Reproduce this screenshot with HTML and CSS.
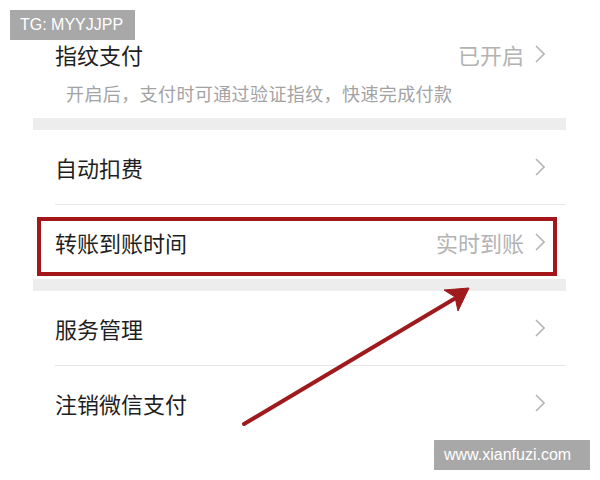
FILE: index.html
```html
<!DOCTYPE html>
<html lang="zh-CN">
<head>
    <meta charset="UTF-8">
    <meta name="viewport" content="width=device-width, initial-scale=1.0">
    <title>支付设置</title>
    <link rel="stylesheet" href="styles.css">
</head>
<body>

    <div class="page">

        <div class="settings">

            <div class="group">
                <div class="item-first">
                    <div class="row-line">
                        <span class="title">指纹支付</span>
                        <span class="value">已开启
                            <svg class="chevron" width="10" height="18" viewBox="0 0 10 18"><polyline points="1,1 9,9 1,17"/></svg>
                        </span>
                    </div>
                    <div class="desc">开启后，支付时可通过验证指纹，快速完成付款</div>
                </div>
            </div>

            <div class="spacer"></div>

            <div class="group">
                <div class="row">
                    <span class="title">自动扣费</span>
                    <span class="value">
                        <svg class="chevron" width="10" height="18" viewBox="0 0 10 18"><polyline points="1,1 9,9 1,17"/></svg>
                    </span>
                </div>
                <div class="divider"></div>
                <div class="row row-marked">
                    <span class="title">转账到账时间</span>
                    <span class="value">实时到账
                        <svg class="chevron" width="10" height="18" viewBox="0 0 10 18"><polyline points="1,1 9,9 1,17"/></svg>
                    </span>
                    <div class="mark"></div>
                </div>
            </div>

            <div class="spacer"></div>

            <div class="group">
                <div class="row">
                    <span class="title">服务管理</span>
                    <span class="value">
                        <svg class="chevron" width="10" height="18" viewBox="0 0 10 18"><polyline points="1,1 9,9 1,17"/></svg>
                    </span>
                </div>
                <div class="divider"></div>
                <div class="row">
                    <span class="title">注销微信支付</span>
                    <span class="value">
                        <svg class="chevron" width="10" height="18" viewBox="0 0 10 18"><polyline points="1,1 9,9 1,17"/></svg>
                    </span>
                </div>
            </div>

        </div>

        <!-- annotation arrow -->
        <svg class="arrow" width="600" height="480" viewBox="0 0 600 480">
            <line x1="244" y1="424" x2="454" y2="299"/>
            <polygon points="469,288 444,290 455,297 458,311"/>
        </svg>

        <div class="tag tag-top">TG: MYYJJPP</div>
        <div class="tag tag-bottom">www.xianfuzi.com</div>

    </div>

</body>
</html>
```

FILE: styles.css
```css
body {
    margin: 0;
    background-color: #fff;
    font-family: "Noto Sans CJK SC", "Liberation Sans", sans-serif;
}

.page {
    position: relative;
    width: 600px;
    height: 480px;
    overflow: hidden;
}

.settings {
    margin: 0 34px 0 33px;
}

.group {
    background-color: #fff;
}

.spacer {
    height: 12px;
    background-color: #ededed;
}

.item-first {
    padding: 39px 21px 13px 22px;
}

.row-line {
    display: flex;
    justify-content: space-between;
    align-items: center;
    height: 30px;
}

.desc {
    margin-top: 12px;
    padding-left: 11px;
    font-size: 18px;
    line-height: 24px;
    letter-spacing: 0.4px;
    color: #a3a3a3;
}

.row {
    position: relative;
    display: flex;
    justify-content: space-between;
    align-items: center;
    height: 74px;
    padding: 0 21px 0 22px;
}

.title {
    font-size: 22px;
    line-height: 30px;
    color: #1f1f1f;
}

.value {
    display: flex;
    align-items: center;
    gap: 11px;
    font-size: 22px;
    line-height: 30px;
    color: #b3b3b3;
}

.chevron polyline {
    fill: none;
    stroke: #b5b5b5;
    stroke-width: 1.6;
}

.divider {
    height: 1px;
    margin-left: 22px;
    background-color: #e6e6e6;
}

.mark {
    position: absolute;
    left: 4px;
    top: 12px;
    right: 9px;
    bottom: 3px;
    border: 4px solid #a3171a;
}

.arrow {
    position: absolute;
    left: 0;
    top: 0;
}

.arrow line {
    stroke: #9e1a1c;
    stroke-width: 4;
    stroke-linecap: round;
}

.arrow polygon {
    fill: #9e1a1c;
    stroke: #9e1a1c;
    stroke-width: 1;
    stroke-linejoin: round;
}

.tag {
    position: absolute;
    height: 30px;
    line-height: 30px;
    padding: 0 10px;
    background-color: #a8a8a8;
    color: #fff;
    font-family: "Liberation Sans", Arial, sans-serif;
    font-size: 16px;
}

.tag-top {
    left: 10px;
    top: 10px;
    width: 105px;
}

.tag-bottom {
    left: 434px;
    top: 440px;
    width: 136px;
}
```
